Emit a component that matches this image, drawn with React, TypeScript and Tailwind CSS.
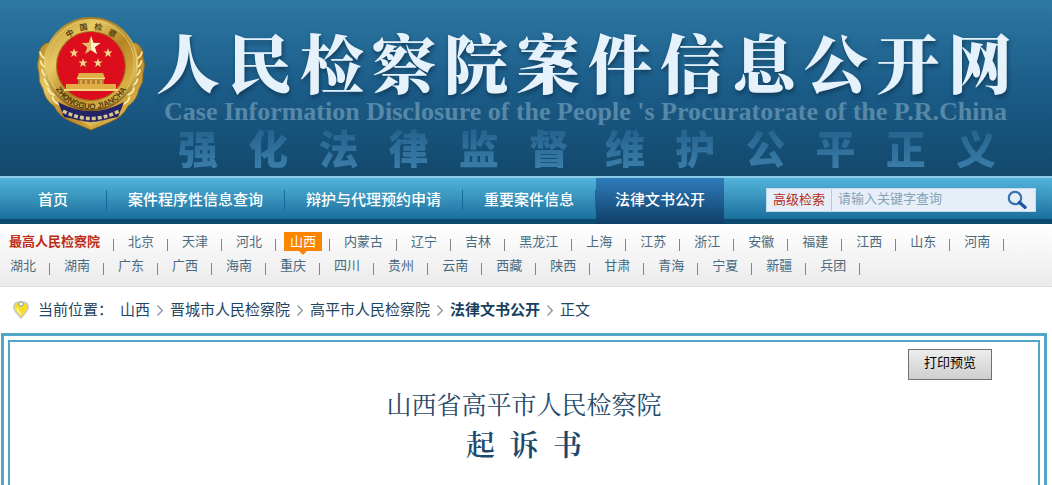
import React, { useState, FormEvent } from "react";

interface NavItem {
  label: string;
  active?: boolean;
}

const navItems: NavItem[] = [
  { label: "首页" },
  { label: "案件程序性信息查询" },
  { label: "辩护与代理预约申请" },
  { label: "重要案件信息" },
  { label: "法律文书公开", active: true },
];

const regions = [
  "北京", "天津", "河北", "山西", "内蒙古", "辽宁", "吉林", "黑龙江",
  "上海", "江苏", "浙江", "安徽", "福建", "江西", "山东", "河南",
  "湖北", "湖南", "广东", "广西", "海南", "重庆", "四川", "贵州",
  "云南", "西藏", "陕西", "甘肃", "青海", "宁夏", "新疆", "兵团",
];

const crumbs = ["山西", "晋城市人民检察院", "高平市人民检察院", "法律文书公开", "正文"];

const STAR = "0,-10 2.4,-3.2 9.5,-3.1 3.8,1.2 5.9,8.1 0,4 -5.9,8.1 -3.8,1.2 -9.5,-3.1 -2.4,-3.2";

const smallStars = [
  [38, 37],
  [72, 37],
  [47, 47],
  [62, 47],
];

const Emblem: React.FC = () => (
  <svg width="110" height="116" viewBox="0 0 110 116" className="shrink-0" aria-hidden="true">
    <defs>
      <linearGradient id="gold" x1="0" y1="0" x2="1" y2="1">
        <stop offset="0" stopColor="#b98a26" />
        <stop offset="0.3" stopColor="#e8cb66" />
        <stop offset="0.55" stopColor="#b58324" />
        <stop offset="0.8" stopColor="#d9b046" />
        <stop offset="1" stopColor="#80590f" />
      </linearGradient>
      <linearGradient id="rim" x1="0" y1="0" x2="0" y2="1">
        <stop offset="0" stopColor="#a67c24" />
        <stop offset="0.5" stopColor="#ecd47a" />
        <stop offset="1" stopColor="#7d5713" />
      </linearGradient>
      <path id="lowerArc" d="M14 58 A41.500 41.500 0 0 0 96 58" />
    </defs>
    {/* shield and wreath */}
    <path
      d="M10 27 Q2 32 3 41 Q0 49 3 57 Q2 66 7 73 Q9 84 18 90 Q23 101 36 106 L55 114 L74 106 Q87 101 92 90 Q101 84 103 73 Q108 66 107 57 Q110 49 107 41 Q108 32 100 27 Z"
      fill="url(#gold)"
      stroke="#8c681e"
      strokeWidth="0.8"
    />
    {[0, 1, 2, 3, 4, 5].map((i) => (
      <g key={i} fill="none" stroke="#fbeeb0" strokeWidth="1.6" strokeLinecap="round">
        <path d={`M${4 + i * i * 0.5} ${36 + i * 9} q1 5 6 7`} />
        <path d={`M${106 - i * i * 0.5} ${36 + i * 9} q-1 5 -6 7`} />
      </g>
    ))}
    <path d="M22 86 Q55 104 88 86 L82 101 Q68 103 55 109 Q42 103 28 101 Z" fill="#232468" />
    <path d="M27 95 Q55 110 83 95" fill="none" stroke="#d8c690" strokeWidth="3.500" strokeDasharray="4 2" />
    <path d="M43 104 Q55 108 67 104 L55 111 Z" fill="#d9b859" />
    {/* ring */}
    <circle cx="55" cy="48" r="46" fill="url(#gold)" stroke="url(#rim)" strokeWidth="2" />
    <circle cx="55" cy="48" r="43.500" fill="none" stroke="#e3c668" strokeWidth="1" />
    <circle cx="55" cy="50" r="34.5" fill="#dc0d1c" stroke="#a67820" strokeWidth="1.2" />
    <polygon points={STAR} transform="translate(55 30)" fill="#e0bd6c" />
    <path d="M55 20 L55 34 L60.9 38 L58.8 31 L64.5 27 L57.4 27 Z" fill="#fff4c8" />
    {smallStars.map(([x, y]) => (
      <polygon key={`${x}-${y}`} points={STAR} transform={`translate(${x} ${y}) scale(0.48)`} fill="#f3d98c" />
    ))}
    {/* gate */}
    <g fill="#e0ae45">
      <path d="M43 57 h24 l2 5 h-28 z" />
      <rect x="42" y="62" width="26" height="6" fill="#b9812a" />
      <path d="M30 68 h50 v5 h-50 z" />
      <path d="M28 73 h54 v2 h-54 z" fill="#f4d583" />
      <path d="M41 62.500 h28" stroke="#f8e29a" strokeWidth="1.2" />
      <path d="M45 68 v-4 M50 68 v-4 M55 68 v-4 M60 68 v-4 M65 68 v-4" stroke="#f4d583" />
    </g>
    <g fill="#5b430f" fontSize="8" fontWeight="700" textAnchor="middle" fontFamily="'Noto Sans CJK SC', sans-serif">
      <text transform="translate(35 20) rotate(-27)">中</text>
      <text transform="translate(48 14) rotate(-9)">国</text>
      <text transform="translate(62 14) rotate(9)">检</text>
      <text transform="translate(75 20) rotate(27)">察</text>
    </g>
    <text fill="#4d3a10" fontSize="8" fontWeight="700" fontFamily="'Liberation Sans', sans-serif" textAnchor="middle">
      <textPath href="#lowerArc" startOffset="50%">ZHONGGUO JIANCHA</textPath>
    </text>
  </svg>
);

const PinIcon: React.FC = () => (
  <svg width="18" height="20" viewBox="0 0 18 20" aria-hidden="true">
    <path d="M9 19.5 C6 15 1 11.500 1 7 Q1 1 9 1 Q17 1 17 7 C17 11.500 12 15 9 19.500 Z" fill="#c3ccd0" />
    <path d="M9 17.500 C7 14 2.500 11 2.500 7 Q2.500 2.500 9 2.500 Q15.500 2.500 15.500 7 C15.500 11 11 14 9 17.500 Z" fill="#f3de2c" />
    <path d="M5 8 Q6 12 9 14" fill="none" stroke="#fbf39a" strokeWidth="2" />
    <circle cx="9" cy="4" r="2.200" fill="#fff" stroke="#8a9488" />
  </svg>
);

const SearchIcon: React.FC = () => (
  <svg width="20" height="20" viewBox="0 0 20 20" fill="none" aria-hidden="true">
    <circle cx="8" cy="8" r="6.200" stroke="#3a70b5" strokeWidth="2.200" />
    <path d="M12.500 12.500 L18 17.300" stroke="#1d559f" strokeWidth="3.400" strokeLinecap="round" />
  </svg>
);

const Banner: React.FC = () => (
  <header className="flex h-44 gap-2 overflow-hidden bg-linear-to-b from-[#2d78a3] via-[#1b5c88] to-[#13486c] pl-9 pt-4">
    <Emblem />
    <div className="flex flex-col whitespace-nowrap">
      <h1 className="flex h-20 gap-2 pt-2 pl-0.5 font-['Noto_Serif_CJK_SC','Noto_Sans_CJK_SC',serif] text-[64px] leading-[72px] font-black text-[#e6f2fb] [text-shadow:1px_3px_4px_#123e5e]">
        {"人民检察院案件信息公开网".split("").map((char) => (
          <span key={char}>{char}</span>
        ))}
      </h1>
      <p className="pl-2.5 pt-1 font-['Liberation_Serif',serif] text-[26px] leading-6 font-bold text-[#5688a7]">
        Case Information Disclosure of the People 's Procuratorate of the P.R.China
      </p>
      <p className="flex justify-between gap-9 bg-linear-to-b from-[#23608b] to-[#3a7ca8] bg-clip-text pl-6 pr-4 pt-2 text-[40px] leading-9 font-black text-transparent">
        {["强化法律监督", "维护公平正义"].map((phrase) => (
          <span key={phrase} className="flex flex-1 justify-between">
            {phrase.split("").map((char) => (
              <span key={char}>{char}</span>
            ))}
          </span>
        ))}
      </p>
    </div>
  </header>
);

const SearchBar: React.FC = () => {
  const [keyword, setKeyword] = useState("");

  const handleSubmit = (e: FormEvent) => {
    e.preventDefault();
  };

  return (
    <form
      onSubmit={handleSubmit}
      className="mr-4 flex h-6 w-[270px] items-center border border-[#c3dcec] bg-[#e6eff7] text-[13px]"
    >
      <a href="#advanced" className="px-1.5 text-[#b8291c]">高级检索</a>
      <input
        type="text"
        name="keyword"
        aria-label="请输入关键字查询"
        placeholder="请输入关键字查询"
        value={keyword}
        onChange={(e) => setKeyword(e.target.value)}
        className="h-[22px] min-w-0 flex-1 border-l border-[#b5c8d6] pb-1 pl-1.5 text-[#35576f] outline-none placeholder:text-[#86a3b8]"
      />
      <button type="submit" aria-label="搜索" className="pr-2">
        <SearchIcon />
      </button>
    </form>
  );
};

const NavBar: React.FC = () => (
  <div className="flex h-12 justify-between border-t-2 border-[#8ccbe8] bg-linear-to-b from-[#52b4da] to-[#136896] shadow-[inset_0_-5px_0_#0d4a72]">
    <nav className="flex text-[15px] leading-11 whitespace-nowrap text-white">
      {navItems.map((item, i) =>
        item.active ? (
          <a key={item.label} href="#docs" className="bg-linear-to-b from-[#2f7cbb] to-[#0f4069] px-[19px] font-medium">
            {item.label}
          </a>
        ) : (
          <div key={item.label} className="flex">
            <a href="#nav" className={i === 0 ? "px-[38px] font-medium" : "px-[21px] font-medium"}>
              {item.label}
            </a>
            <span className="mt-3 h-5 w-px bg-[#0f6b9c]" />
          </div>
        )
      )}
    </nav>
    <div className="pt-2.5">
      <SearchBar />
    </div>
  </div>
);

const Separator: React.FC = () => <span className="mx-[13px] mt-[7px] h-3 w-px bg-[#858585]" />;

const RegionList: React.FC = () => (
  <ul className="flex flex-wrap border-b border-[#dcdcdc] bg-linear-to-b from-white to-[#ebebeb] pt-2 pr-2 pb-1.5 pl-[9px] text-[13px] leading-5 text-[#4a6a80]">
    <li className="flex h-6">
      <a href="#supreme" className="font-bold text-[#bd2c17]">最高人民检察院</a>
      <Separator />
    </li>
    {regions.map((name) => (
      <li key={name} className="flex h-6 pl-px">
        {name === "山西" ? (
          <a href="#region" className="relative -mx-1.5 h-[19px] self-start bg-[#fb8500] px-1.5 text-white">
            {name}
            <span className="absolute top-full left-1/2 -ml-1 border-x-4 border-t-4 border-x-transparent border-t-[#fb8500]" />
          </a>
        ) : (
          <a href="#region">{name}</a>
        )}
        <Separator />
      </li>
    ))}
  </ul>
);

const Breadcrumb: React.FC = () => (
  <nav className="flex h-[46px] items-center pl-3 text-[15px] text-[#1f4563]">
    <PinIcon />
    <span className="pl-2">当前位置：</span>
    <ol className="flex pl-[7px]">
      {crumbs.map((name, i) => (
        <li key={name} className="flex items-center">
          {i > 0 && (
            <svg width="6" height="11" viewBox="0 0 6 11" fill="none" className="mx-[7px]" aria-hidden="true">
              <path d="M0.500 0.500 L5.300 5.500 L0.500 10.500" stroke="#8794a0" strokeWidth="1.200" />
            </svg>
          )}
          <a href="#crumb" className={name === "法律文书公开" ? "font-bold text-[#173f60]" : ""}>
            {name}
          </a>
        </li>
      ))}
    </ol>
  </nav>
);

const App: React.FC = () => {
  return (
    <div className="flex min-h-screen flex-col bg-white font-['Liberation_Sans','Noto_Sans_CJK_SC',sans-serif]">
      <Banner />
      <NavBar />
      <RegionList />
      <Breadcrumb />
      <main className="mr-[5px] ml-px flex flex-1 flex-col border-[3px] border-b-0 border-[#4fa7c5] px-1 pt-1">
        <article className="flex-1 border-2 border-b-0 border-[#4fa7c5] pt-[7px] text-center text-[#25496a]">
          <div className="flex justify-end pr-[46px]">
            <button
              type="button"
              onClick={() => window.print()}
              className="h-[31px] w-21 border border-[#707070] bg-linear-to-b from-[#ededed] to-[#cfcfcf] pb-1 text-[13px] text-black"
            >
              打印预览
            </button>
          </div>
          <div className="pt-2.5 font-['Liberation_Serif','Noto_Serif_CJK_SC','Noto_Sans_CJK_SC',serif]">
            <h2 className="text-[25px] leading-8">山西省高平市人民检察院</h2>
            <h3 className="pt-1 text-[29px] leading-10 font-semibold text-[#1b4a6e]">
              起{"\u00a0\u00a0"}诉{"\u00a0\u00a0"}书
            </h3>
          </div>
        </article>
      </main>
    </div>
  );
};

export default App;
